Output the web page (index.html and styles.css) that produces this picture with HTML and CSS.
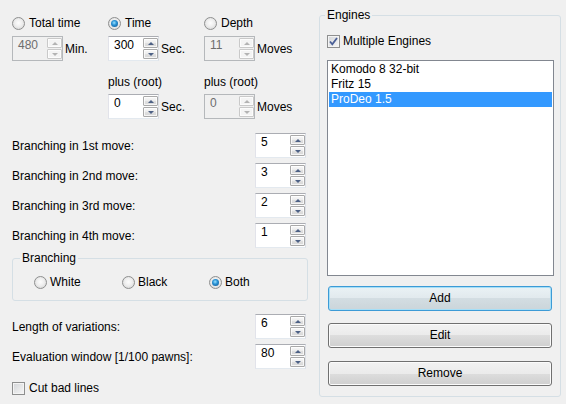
FILE: index.html
```html
<!DOCTYPE html>
<html>
<head>
<meta charset="utf-8">
<link rel="stylesheet" href="styles.css">
</head>
<body>
<div class="dialog">
  <div class="left">
    <div class="trow r1">
      <label class="radio"><span class="rb"></span>Total time</label>
      <label class="radio"><span class="rb on"></span>Time</label>
      <label class="radio"><span class="rb"></span>Depth</label>
    </div>
    <div class="trow r2">
      <div class="field"><div class="spin dis"><span class="val">480</span><span class="btns"><span class="sb up"></span><span class="sb dn"></span></span></div><span class="unit">Min.</span></div>
      <div class="field"><div class="spin"><span class="val">300</span><span class="btns"><span class="sb up"></span><span class="sb dn"></span></span></div><span class="unit">Sec.</span></div>
      <div class="field"><div class="spin dis"><span class="val">11</span><span class="btns"><span class="sb up"></span><span class="sb dn"></span></span></div><span class="unit">Moves</span></div>
    </div>
    <div class="trow r3">
      <span></span>
      <span>plus (root)</span>
      <span>plus (root)</span>
    </div>
    <div class="trow r4">
      <span></span>
      <div class="field"><div class="spin"><span class="val">0</span><span class="btns"><span class="sb up"></span><span class="sb dn"></span></span></div><span class="unit">Sec.</span></div>
      <div class="field"><div class="spin dis"><span class="val">0</span><span class="btns"><span class="sb up"></span><span class="sb dn"></span></span></div><span class="unit">Moves</span></div>
    </div>

    <div class="brows">
      <div class="row"><span class="lbl">Branching in 1st move:</span><div class="spin"><span class="val">5</span><span class="btns"><span class="sb up"></span><span class="sb dn"></span></span></div></div>
      <div class="row"><span class="lbl">Branching in 2nd move:</span><div class="spin"><span class="val">3</span><span class="btns"><span class="sb up"></span><span class="sb dn"></span></span></div></div>
      <div class="row"><span class="lbl">Branching in 3rd move:</span><div class="spin"><span class="val">2</span><span class="btns"><span class="sb up"></span><span class="sb dn"></span></span></div></div>
      <div class="row"><span class="lbl">Branching in 4th move:</span><div class="spin"><span class="val">1</span><span class="btns"><span class="sb up"></span><span class="sb dn"></span></span></div></div>
    </div>

    <fieldset class="group branch">
      <legend>Branching</legend>
      <div class="radios">
        <label class="radio"><span class="rb"></span>White</label>
        <label class="radio"><span class="rb"></span>Black</label>
        <label class="radio"><span class="rb on"></span>Both</label>
      </div>
    </fieldset>

    <div class="row len"><span class="lbl">Length of variations:</span><div class="spin"><span class="val">6</span><span class="btns"><span class="sb up"></span><span class="sb dn"></span></span></div></div>
    <div class="row eval"><span class="lbl">Evaluation window [1/100 pawns]:</span><div class="spin"><span class="val">80</span><span class="btns"><span class="sb up"></span><span class="sb dn"></span></span></div></div>

    <label class="check cut"><span class="cb"></span>Cut bad lines</label>
  </div>

  <fieldset class="group engines">
    <legend>Engines</legend>
    <label class="check multi"><span class="cb"><svg width="11" height="11" viewBox="0 0 11 11"><path d="M2 5.5 L4.3 8.3 L9 2" fill="none" stroke="#4a5f97" stroke-width="1.8"/></svg></span>Multiple Engines</label>
    <ul class="list">
      <li>Komodo 8 32-bit</li>
      <li>Fritz 15</li>
      <li class="sel">ProDeo 1.5</li>
    </ul>
    <button class="btn def b1">Add</button>
    <button class="btn b2">Edit</button>
    <button class="btn b3">Remove</button>
  </fieldset>
</div>
</body>
</html>
```
FILE: styles.css
```css
* { box-sizing: border-box; }
html, body { margin: 0; }
body {
  background: #f0f0f0;
  font: 12px/15px "Liberation Sans", Arial, sans-serif;
  color: #000;
  width: 566px;
  height: 404px;
  overflow: hidden;
}
.dialog { display: flex; align-items: flex-start; padding-left: 12px; }
.left { width: 296px; padding-top: 16px; display: flex; flex-direction: column; }

.trow { display: grid; grid-template-columns: 96px 96px 96px; align-items: center; }
.r1 { height: 14px; }
.r2 { margin-top: 6px; height: 25px; }
.r3 { margin-top: 13px; height: 14px; padding-top: 1px; }
.r4 { margin-top: 6px; height: 25px; }

.radio { display: flex; align-items: center; height: 14px; white-space: nowrap; }
.rb {
  flex: none;
  width: 13px; height: 13px;
  border-radius: 50%;
  border: 1px solid #8e8f8f;
  background: radial-gradient(circle at 50% 45%, #fdfdfd 0, #eeeeee 45%, #cfcfcf 100%);
  margin-right: 4px;
  display: flex; align-items: center; justify-content: center;
}
.rb.on::after {
  content: "";
  width: 7px; height: 7px;
  border-radius: 50%;
  background: radial-gradient(circle at 45% 40%, #9be3ff 0, #2a93d6 40%, #0d4d86 100%);
}

.field { display: flex; align-items: center; gap: 2px; }
.unit { padding-top: 2px; }

.spin {
  flex: none;
  width: 51px; height: 25px;
  display: flex;
  border: 1px solid;
  border-color: #abadb3 #dbdfe6 #e3e9ef #e2e3ea;
  background: #fff;
}
.spin .val { flex: 1; padding: 1px 0 0 5px; line-height: 15px; }
.spin .btns { width: 15px; padding: 1px 0; display: flex; flex-direction: column; gap: 1px; }
.sb {
  flex: 1;
  border: 1px solid #a9a9a9;
  border-radius: 1px;
  background: linear-gradient(#f8f8f8, #ececec 50%, #e0e0e0 51%, #d6d6d6);
  box-shadow: inset 0 0 0 1px rgba(255,255,255,0.75);
  display: flex; align-items: center; justify-content: center;
}
.sb::after { content: ""; border-left: 3px solid transparent; border-right: 3px solid transparent; }
.sb.up::after { border-bottom: 3px solid #4d6185; }
.sb.dn::after { border-top: 3px solid #4d6185; }

.spin.dis { background: #f0f0f0; border-color: #b5b8bb; color: #6d6d6d; }
.spin.dis .sb { border-color: #c9c9c9; background: #f4f4f4; }
.spin.dis .sb.up::after { border-bottom-color: #b3b3b3; }
.spin.dis .sb.dn::after { border-top-color: #b3b3b3; }

.brows { margin-top: 14px; display: flex; flex-direction: column; gap: 5px; }
.row { display: flex; justify-content: space-between; align-items: center; height: 25px; padding-right: 2px; }
.lbl { padding-top: 2px; }

.group { margin: 0; border: 1px solid #d5dfe5; border-radius: 3px; min-width: 0; }
.group legend { padding: 0 2px; line-height: 15px; }

.branch { margin-top: 3px; width: 296px; padding: 9px 0 11px 7px; }
.radios { display: grid; grid-template-columns: 88px 87px auto; padding-left: 14px; }
.radios .radio .rb { margin-right: 3px; }

.len { margin-top: 13px; }
.eval { margin-top: 5px; }

.check { display: flex; align-items: center; height: 14px; white-space: nowrap; }
.cut { margin-top: 12px; }
.cb {
  flex: none;
  width: 13px; height: 13px;
  border: 1px solid #8e8f8f;
  background: linear-gradient(135deg, #d3d5d8, #f7f7f7);
  box-shadow: inset 0 0 0 1px #f4f4f4;
  margin-right: 4px;
  display: flex; align-items: center; justify-content: center;
}
.multi .cb { margin-right: 3px; }
.cb svg { display: block; }

.engines { margin: 8px 0 0 11px; width: 242px; height: 389px; padding: 11px 6px 0 7px; }
.engines legend { margin-left: -2px; }

.list {
  list-style: none;
  margin: 12px 0 0;
  padding: 1px;
  height: 216px;
  border: 1px solid #828790;
  background: #fff;
}
.list li { height: 15px; line-height: 15px; padding-left: 2px; white-space: nowrap; }
.list li.sel { background: #3399ff; color: #fff; }

.btn {
  display: block;
  width: 224px; height: 25px;
  margin-left: 1px;
  padding: 0;
  font: inherit;
  color: #000;
  border: 1px solid #707070;
  border-radius: 3px;
  background: linear-gradient(#f2f2f2, #ebebeb 50%, #dddddd 50%, #cfcfcf);
  box-shadow: inset 0 0 0 1px #fbfbfb;
}
.btn.def {
  border-color: #3d9bd6;
  background: linear-gradient(#eaf2f5, #e1e9ed 50%, #d3dde2 50%, #cbd5da);
  box-shadow: inset 0 0 0 1px #a6dff7;
}
.b1 { margin-top: 10px; }
.b2 { margin-top: 12px; }
.b3 { margin-top: 13px; }
```
